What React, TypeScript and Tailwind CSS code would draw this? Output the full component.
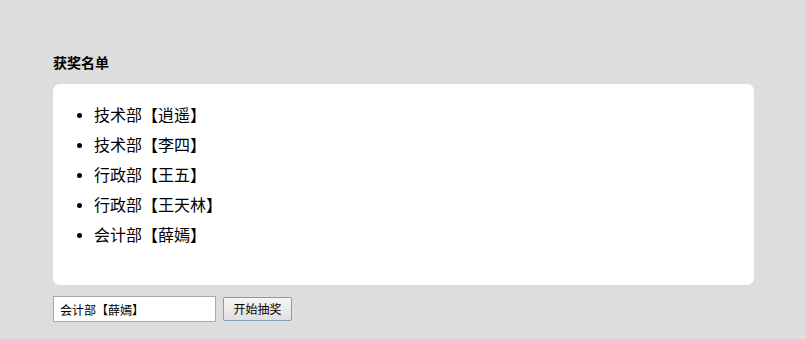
import React, { useState } from "react";

const winners = [
  { dept: "技术部", name: "逍遥" },
  { dept: "技术部", name: "李四" },
  { dept: "行政部", name: "王五" },
  { dept: "行政部", name: "王天林" },
  { dept: "会计部", name: "薛嫣" },
];

export default function App() {
  const [current, setCurrent] = useState("会计部【薛嫣】");

  return (
    <div
      className="min-h-[339px] w-full bg-[#dddddd] px-[53px] pt-[53px] text-black"
      style={{ fontFamily: '"Noto Sans CJK SC", "Noto Sans", sans-serif' }}
    >
      <h3 className="text-[14px] font-bold leading-[18px]">获奖名单</h3>
      <div className="mt-[13px] w-[701px] h-[201px] rounded-[7px] bg-white">
        <ul className="list-disc pl-[41px] pt-[15px] text-[16px] leading-[30px] marker:text-[13px]">
          {winners.map((w, i) => (
            <li key={i}>
              {w.dept}【{w.name}】
            </li>
          ))}
        </ul>
      </div>
      <div className="mt-[11px] flex items-center gap-[7px]">
        <input
          value={current}
          onChange={(e) => setCurrent(e.target.value)}
          className="h-[26px] w-[163px] border border-[#a9a9a9] bg-white px-[6px] text-[12px] outline-none"
        />
        <button className="h-[24px] w-[69px] rounded-[2px] border border-[#7f9db9] bg-gradient-to-b from-[#f6f6f6] to-[#e0e0e0] text-[12px] leading-none">
          开始抽奖
        </button>
      </div>
    </div>
  );
}
